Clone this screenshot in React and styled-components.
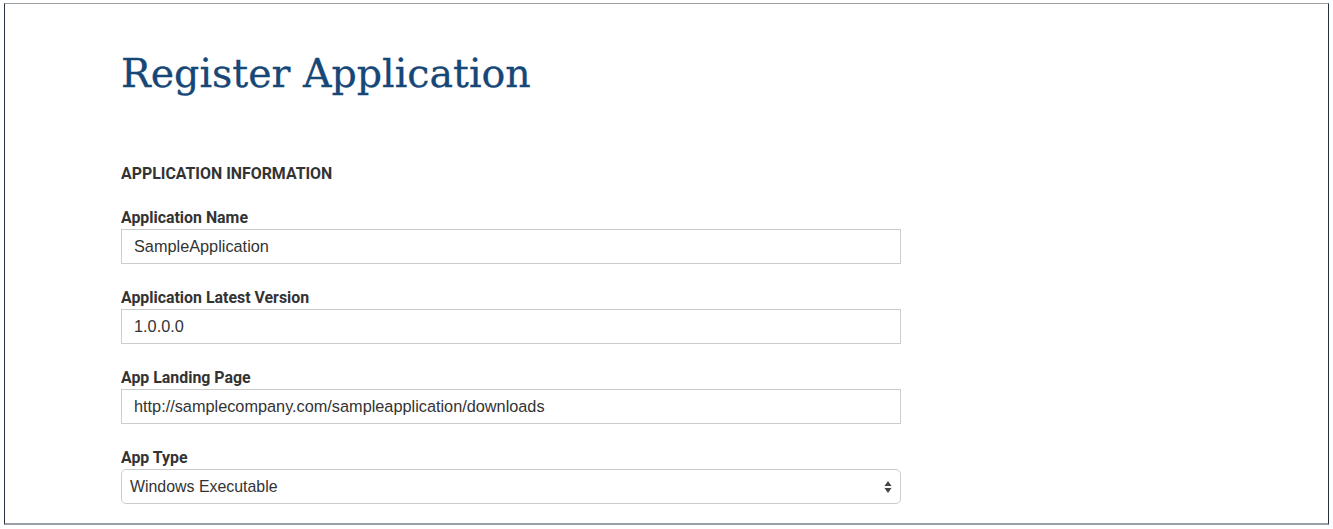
import React from "react";
import styled, { createGlobalStyle } from "styled-components";

const Global = createGlobalStyle`
  html, body { margin: 0; padding: 0; background: #fff; }
  body { font-family: "Liberation Sans", Arial, sans-serif; }
  * { box-sizing: border-box; }
`;

const Frame = styled.div`
  margin: 3px 0 0 4px;
  width: 1325px;
  height: 522px;
  border-top: 1px solid #9aa0a6;
  border-bottom: 2px solid #9aa0a6;
  border-left: 1px solid #24323f;
  border-right: 1px solid #24323f;
  padding: 43px 0 0 116px;
  overflow: hidden;
`;

const Title = styled.h1`
  margin: 0;
  font-family: "DejaVu Serif", "Liberation Serif", serif;
  font-weight: 400;
  font-size: 39.5px;
  line-height: 53px;
  color: #174777;
  -webkit-text-stroke: 0.3px #174777;
`;

const SectionHeader = styled.h2`
  margin: 64px 0 0;
  font-family: Roboto, "Liberation Sans", sans-serif;
  font-weight: 700;
  font-size: 15.9px;
  line-height: 20px;
  color: #333;
  text-transform: uppercase;
`;

const Fields = styled.div`
  margin-top: 24px;
  display: flex;
  flex-direction: column;
  gap: 24px;
  width: 780px;
`;

const Field = styled.div`
  display: flex;
  flex-direction: column;
  gap: 1px;
`;

const Label = styled.label`
  font-family: Roboto, "Liberation Sans", sans-serif;
  font-weight: 700;
  font-size: 15.9px;
  line-height: 20px;
  color: #333;
`;

const Input = styled.div`
  height: 35px;
  border: 1px solid #ccc;
  padding: 0 12px;
  display: flex;
  align-items: center;
  font-family: "Liberation Sans", Arial, sans-serif;
  font-size: 16.3px;
  color: #333;
`;

const Select = styled(Input)`
  border-radius: 5px;
  padding: 0 8px;
  font-size: 15.9px;
  justify-content: space-between;
`;

const Arrows = () => (
  <svg width="8" height="14" viewBox="0 0 8 14">
    <path d="M4 1 L7.5 6 L0.5 6 Z" fill="#444" />
    <path d="M4 13 L7.5 8 L0.5 8 Z" fill="#444" />
  </svg>
);

const fields = [
  { label: "Application Name", value: "SampleApplication" },
  { label: "Application Latest Version", value: "1.0.0.0" },
  { label: "App Landing Page", value: "http://samplecompany.com/sampleapplication/downloads" },
];

export default function App() {
  return (
    <>
      <Global />
      <Frame>
        <Title>Register Application</Title>
        <SectionHeader>Application Information</SectionHeader>
        <Fields>
          {fields.map((f) => (
            <Field key={f.label}>
              <Label>{f.label}</Label>
              <Input>{f.value}</Input>
            </Field>
          ))}
          <Field>
            <Label>App Type</Label>
            <Select>
              <span>Windows Executable</span>
              <Arrows />
            </Select>
          </Field>
        </Fields>
      </Frame>
    </>
  );
}
